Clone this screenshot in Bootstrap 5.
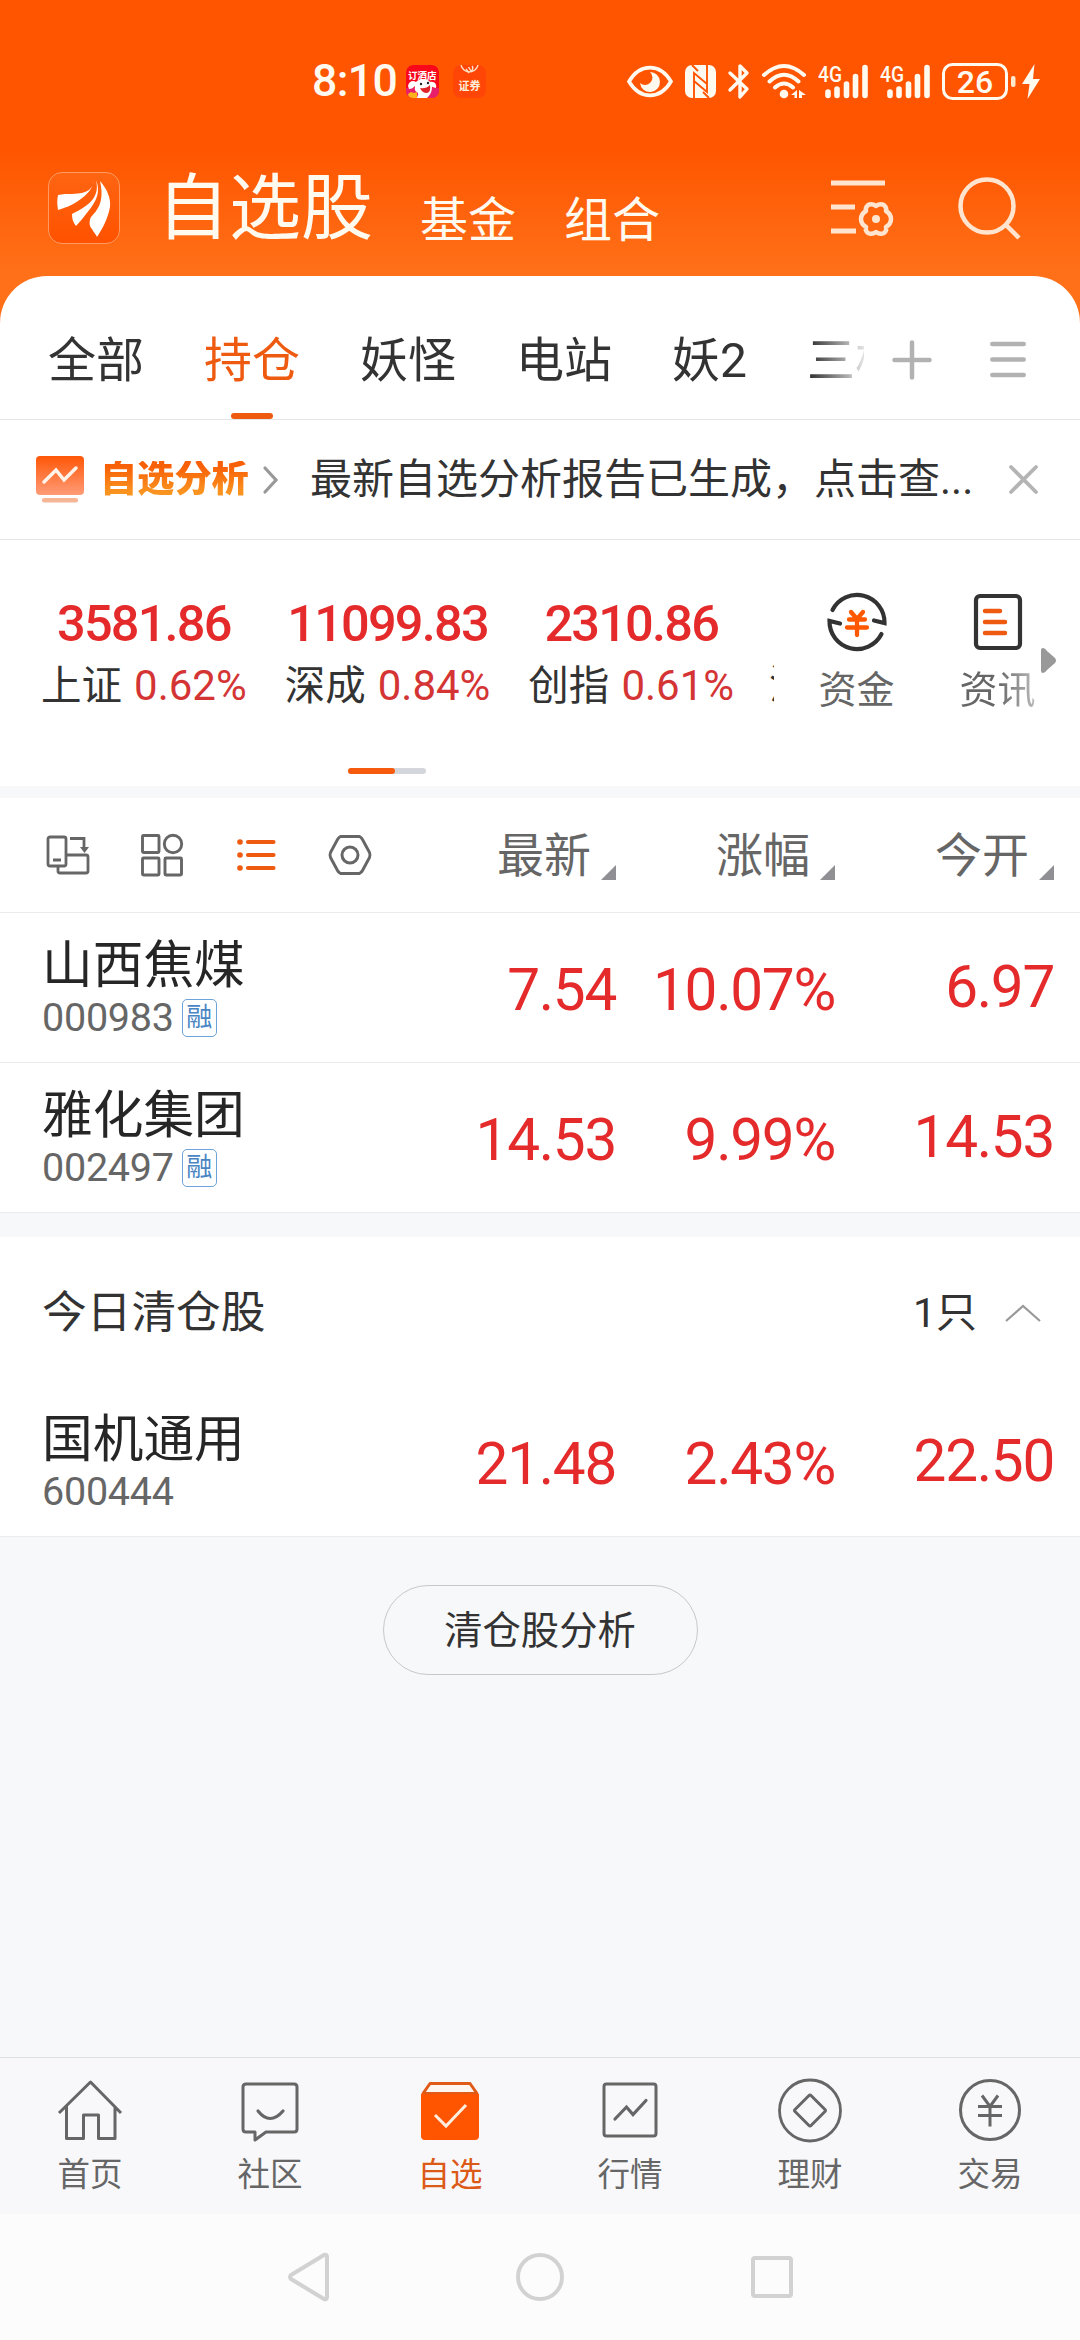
<!DOCTYPE html>
<html lang="zh-CN">
<head>
<meta charset="utf-8">
<meta name="viewport" content="width=device-width, initial-scale=1">
<title>自选股</title>
<link href="https://cdn.jsdelivr.net/npm/bootstrap@5.3.0/dist/css/bootstrap.min.css" rel="stylesheet">
<style>
html,body{width:1080px;height:2340px;overflow:hidden}
body{font-family:Roboto,"Noto Sans CJK SC",sans-serif;background:#f7f8fa;color:#333;line-height:1;-webkit-text-size-adjust:none}
svg{display:block;flex:none;overflow:visible}
.ln{fill:none;stroke:currentColor}
.hero{height:330px;background:linear-gradient(#ff5500 0,#ff5500 150px,#ff7018 270px,#ff7018 100%);margin-bottom:-54px;color:#fffaf0}
.status{height:162px;padding-left:312px}
.clock{font-size:44.500px;width:94px;letter-spacing:-.6px;font-weight:500}
.appico{width:33px;height:33px;border-radius:7px;overflow:hidden}
.appico+.appico{margin-left:14px}
.brand{height:92px;padding:0 59px 0 48px}
.brand-logo{width:72px;height:72px;border:1px solid #ff9a60;border-radius:14px;background:linear-gradient(#ff6512,#ff5200)}
.t-big{font-size:72px;margin-left:37px;height:70px}
.subtabs{height:73px;margin-left:47px;gap:48px}
.t-mid{font-size:48px;height:48px}
.panel{background:#fff;border-radius:47px 47px 0 0;height:144px;border-bottom:1px solid #e4e5e7;padding-left:48px}
.tabs{gap:60px;font-size:48px;width:816px;overflow:hidden;white-space:nowrap;padding-top:61px;
 -webkit-mask-image:linear-gradient(90deg,#000 762px,transparent 824px);mask-image:linear-gradient(90deg,#000 762px,transparent 824px)}
.tabs>div{flex:none}
.tab-on{color:#ee5a10}
.tab-on i{width:42px;height:6px;border-radius:3px;background:#ee5a10;margin-top:28px;display:block}
.notice{height:120px;border-bottom:1px solid #e4e5e7;padding:0 42px 0 36px}
.notice b{font-size:37.2px;font-weight:900;margin-left:16px;width:149px;white-space:nowrap;background:linear-gradient(#f86008 15%,#fa9420 85%);-webkit-background-clip:text;color:transparent}
.notice p{font-size:42px;margin:0 0 0 32px;width:662px;white-space:nowrap}
.quotes{height:246px}
.quote-top{height:228px}
.idx{width:774px;overflow:hidden;padding-left:22px}
.idx>div{width:243.7px;flex:none;text-align:center;padding-top:61px}
.idx>.idx-next{text-align:left;padding-left:16px;width:21px;overflow:hidden}
.idx strong{display:block;font-size:50.5px;font-weight:500;letter-spacing:-1.8px;color:#e42a2a;line-height:46px;height:64px}
.idx span{font-size:40.500px;white-space:nowrap;word-spacing:2px}
.idx em{font-style:normal;color:#d43534;font-size:42px}
.tool{width:141px;padding-top:52px;font-size:38px;color:#666}
.tool div{margin-top:19px}
.fade-out{background:linear-gradient(90deg,#666 50%,#bbb);-webkit-background-clip:text;color:transparent}
.more{position:absolute;left:267px;top:108px}
.bar{width:78px;height:6px;border-radius:3px;background:#d3d7dc;margin-left:348px}
.bar i{display:block;width:47px;height:6px;border-radius:3px;background:#f65a0c}
.band{background:#f7f8fa}
.thead-row{height:115px;border-bottom:1px solid #ebecee;background:#fff;padding-left:46px;color:#666}
.hcol{width:219px;font-size:47px;line-height:45px}
.hcol svg{margin:34px 0 0 10px}
.stock{height:150px;border-bottom:1px solid #ebecee;background:#fff;padding-left:42px}
.stock-id{width:355px}
.sname{font-size:50.7px;color:#262626;margin-top:26px;line-height:54px}
.scode{font-size:39.5px;color:#666;line-height:38px;margin-top:6px;letter-spacing:-.25px}
.rong{width:35px;height:38px;border:1.5px solid #6ca3d8;border-radius:5px;color:#4a86c4;font-size:26px;line-height:34px;text-align:center;margin-left:8px}
.val{width:219px;text-align:right;font-size:58.5px;color:#e42a2a;letter-spacing:-1.300px;line-height:60px;padding-top:47px}
.val.up{padding-top:44px}
.cleared{height:150px;background:#fff;padding:2px 39px 0 42px}
.pill{width:315px;height:90px;border:1.5px solid #c6c8ca;border-radius:45px;font-size:38.3px;color:#333;margin:48px auto 0;padding:2px 0 0;background:transparent}
.tabbar{height:157px;border-top:1px solid #dfe0e2;background:#f8f8fa;color:#666}
.tabbar>div{width:180px;font-size:32.5px}
.tabbar svg{height:64px;width:64px;margin:20px 0 17px}
.sysnav{height:126px;background:#fcfcfc;color:#d2d2d2;gap:187px}
</style>
</head>
<body>
<div class="d-flex flex-column h-100">
<header class="hero flex-shrink-0">
 <div class="status d-flex align-items-center">
  <div class="clock">8:10</div>
  <svg class="appico" viewBox="0 0 33 33"><rect width="33" height="33" rx="7" fill="#f9081c"/><path d="M0 23h33v10H0z" fill="#e8206a"/><text x="2" y="14" font-size="9.5" font-weight="700" fill="#fff">订酒店</text><path d="M2 21c1-5 5-6 8-4 3-4 12-4 14 0 5-1 7 3 6 6l-4-1c0 5-2 8-5 11H11c1-3 2-4 0-6-3-1-2-5-2-6-2 2-3 3-6 3z" fill="#fff"/><path d="M14 23q6 1 10-3 1 7-3 8-5 0-7-5z" fill="#e02428"/><circle cx="15" cy="19" r="1.2" fill="#222"/><circle cx="22" cy="18" r="1.2" fill="#222"/><path d="M2 29l3-2 3 1 3-1v6H3z" fill="#ffb21a"/></svg>
  <svg class="appico" viewBox="0 0 33 33"><rect width="33" height="33" rx="7" fill="#ff4606"/><path d="M8 0a8.7 8.7 0 0 0 17 0" fill="none" stroke="#ffe4c8" stroke-width="1.3"/><path d="M13 4l3 4M15.500 2l2.500 4M19 1q2 2-1 6" stroke="#ffe4c8" stroke-width="1.4" fill="none"/><text x="5.500" y="24.500" font-size="11" font-weight="700" fill="#ffeeda">证券</text></svg>
  <svg style="margin-left:141px" width="46" height="33" viewBox="0 0 46 33"><path class="ln" stroke-width="3.600" d="M2 16.500C13-2 33-2 44 16.500C33 35 13 35 2 16.500z"/><path d="M23 7a10 10 0 1 1-10 11 6.500 6.500 0 0 0 10-11z" fill="currentColor"/></svg>
  <svg style="margin-left:12px" width="31" height="33" viewBox="0 0 31 33"><rect width="31" height="33" rx="7" fill="currentColor"/><path stroke="#ff5500" stroke-width="1.900" fill="none" d="M9 33V8l13 11M9 16l13 11V0M7 0l6 6M18 27l6 6"/></svg>
  <svg style="margin-left:12px" width="22" height="35" viewBox="0 0 22 35"><path class="ln" stroke-width="3.400" stroke-linejoin="round" stroke-linecap="round" d="M2 9l17 16-7 8V2l7 7L2 26"/></svg>
  <svg style="margin-left:12px" width="44" height="35" viewBox="0 0 44 35"><path class="ln" stroke-width="4" stroke-linecap="round" d="M2 11Q22-7 42 11M7.500 17.500Q22 4 36.500 17.500M13 23.500q9-8 18 0"/><circle cx="22" cy="30" r="4.300" fill="currentColor"/><path fill="currentColor" d="M29 31l6-5v8h-2.500v-3zM37 26l7 5h-4v3h-3z"/></svg>
  <svg style="margin-left:12px" width="50" height="35" viewBox="0 0 50 35"><text x="0" y="17.500" font-size="22" font-weight="500" textLength="24" lengthAdjust="spacingAndGlyphs" fill="currentColor">4G</text><path class="ln" stroke-width="5.600" stroke-linecap="round" d="M10 28v3.500M19 25v6.500M28.500 20v11.500M37.500 12.500v19M47 3.500v28"/></svg>
  <svg style="margin-left:12px" width="50" height="35" viewBox="0 0 50 35"><text x="0" y="17.500" font-size="22" font-weight="500" textLength="24" lengthAdjust="spacingAndGlyphs" fill="currentColor">4G</text><path class="ln" stroke-width="5.600" stroke-linecap="round" d="M10 28v3.500M19 25v6.500M28.500 20v11.500M37.500 12.500v19M47 3.500v28"/></svg>
  <svg style="margin-left:12px" width="99" height="37" viewBox="0 0 99 37"><rect class="ln" x="1.500" y="1.500" width="63" height="34" rx="9" stroke-width="3" stroke="#ffe8cc"/><text x="33" y="29.500" text-anchor="middle" font-size="32" font-weight="500" fill="currentColor">26</text><rect x="69" y="13" width="4.500" height="11" rx="2" fill="#ffe8cc"/><path fill="currentColor" d="M92.500 1L80 21h7.500l-2 15L98 16h-7z"/></svg>
 </div>
 <div class="brand d-flex align-items-center">
  <div class="brand-logo"><svg width="70" height="70" viewBox="0 0 70 70"><path fill="#fff" d="M44 6c1 6-2 11-8 13-9 3-18 1-27 3-1 5-1 9 0 15 6-2 13-4 20-9 10-7 16-13 15-22zM47 7c4 17-6 25-24 34 0 5 1 8 4 12 5-5 9-11 14-17 6-8 11-17 6-29zM51 8c4 18 0 27-9 36-2 4-2 9 1 12 1 3 4 5 5 8 6-9 11-19 13-30 1-9-3-18-10-26z"/></svg></div>
  <div class="t-big">自选股</div>
  <div class="subtabs d-flex align-items-end"><div class="t-mid">基金</div><div class="t-mid">组合</div></div>
  <svg class="ms-auto" width="64" height="62" viewBox="0 0 64 62" style="color:#ffe5d0"><path class="ln" stroke-width="5" d="M0 6h54M0 30h24M0 54h25"/><path class="ln" stroke-width="4.500" stroke-linejoin="round" d="M37 28q4-2 8 1 4-3 8-1 3 3 2 6 5 3 5 8t-5 8q1 4-2 6-4 2-8-1-4 3-8 1-3-2-2-6-5-3-5-8t5-8q-1-3 2-6z"/><circle cx="45" cy="42" r="4" fill="currentColor"/></svg>
  <svg style="margin-left:63px" width="63" height="63" viewBox="0 0 63 63"><g stroke="#ffe5d0"><circle cx="29" cy="29" r="26.500" fill="none" stroke-width="4.500"/><path stroke-width="4.500" d="M48 48l13 13"/></g></svg>
 </div>
</header>
<nav class="panel d-flex flex-shrink-0 position-relative">
 <div class="tabs d-flex"><div>全部</div><div class="tab-on d-flex flex-column align-items-center">持仓<i></i></div><div>妖怪</div><div>电站</div><div>妖2</div><div>三板</div></div>
 <svg style="margin:64px 0 0 28px" width="40" height="40" viewBox="0 0 40 40"><path stroke="#b2b2b2" stroke-width="4.500" stroke-linecap="round" d="M20 2.500v35M2.500 20h35"/></svg>
 <svg style="margin:65px 0 0 58px" width="36" height="38" viewBox="0 0 36 38"><path stroke="#b2b2b2" stroke-width="4.500" stroke-linecap="round" d="M2.300 3h31.400M2.300 18.500h31.400M2.300 34h31.400"/></svg>
</nav>
<main class="flex-grow-1">
 <div class="bg-white">
 <section class="notice d-flex align-items-center">
  <svg width="48" height="48" viewBox="0 0 48 48"><defs><linearGradient id="g1" x2="0" y2="1"><stop stop-color="#ff5606"/><stop offset="1" stop-color="#ff9c78"/></linearGradient></defs><rect width="48" height="39" rx="4" fill="url(#g1)"/><path d="M8 26L20 14l8 10L40 12" fill="none" stroke="#fff4ea" stroke-width="3.500" stroke-linecap="round"/><rect x="6" y="42" width="36" height="4.500" rx="2" fill="#f6b594"/></svg>
  <b>自选分析</b>
  <svg style="margin-left:14px" width="15" height="28" viewBox="0 0 15 28"><path d="M2 2l11 12L2 26" fill="none" stroke="#999" stroke-width="3.200" stroke-linecap="round"/></svg>
  <p>最新自选分析报告已生成，点击查...</p>
  <svg class="ms-auto" width="29" height="29" viewBox="0 0 29 29"><path d="M2 2l25 25M27 2L2 27" stroke="#b4b4b4" stroke-width="3.800" stroke-linecap="round"/></svg>
 </section>
 <section class="quotes d-flex flex-column align-items-start">
  <div class="quote-top d-flex">
  <div class="idx d-flex">
   <div><strong>3581.86</strong><span>上证 <em>0.62%</em></span></div>
   <div><strong>11099.83</strong><span>深成 <em>0.84%</em></span></div>
   <div><strong>2310.86</strong><span>创指 <em>0.61%</em></span></div>
   <div class="idx-next"><strong>&nbsp;</strong><span>沪</span></div>
  </div>
  <div class="d-flex position-relative" style="padding-left:12px">
   <div class="tool d-flex flex-column align-items-center"><svg width="60" height="60" viewBox="0 0 60 60"><path d="M5.500 18A27.500 27.500 0 0 1 57.500 31L47 28.500M54.500 42A27.500 27.500 0 0 1 2.500 29l10.500 2.500" fill="none" stroke="#333" stroke-width="4.200" stroke-linecap="round"/><path d="M24 20l6 7 6-7M30 27v16M22 27.500h16M20 35.500h20" fill="none" stroke="#ff5800" stroke-width="4.300" stroke-linecap="round"/></svg><div>资金</div></div>
   <div class="tool d-flex flex-column align-items-center"><svg width="60" height="60" viewBox="0 0 60 60"><rect x="8" y="4" width="44" height="52" rx="4" fill="none" stroke="#333" stroke-width="4.200"/><path d="M17 19h15M17 30h20M17 41h20" stroke="#ee5a10" stroke-width="4.500" stroke-linecap="round"/></svg><div class="fade-out">资讯</div></div>
   <svg class="more" width="15" height="25" viewBox="0 0 15 25"><path d="M2 0q2 0 4 3l8 7q2 2.500 0 5l-8 7q-2 3-4 3-2 0-2-2V2q0-2 2-2z" fill="#999"/></svg>
  </div>
  </div>
  <div class="bar"><i></i></div>
 </section>
 </div>
 <div class="band" style="height:12px"></div>
 <div class="thead-row d-flex align-items-center">
  <svg width="44" height="42" viewBox="0 0 44 42"><g class="ln" stroke-width="2.800"><rect x="2" y="3" width="18" height="29" rx="2"/><path d="M20 21h20q2 0 2 2v14q0 2-2 2H14q-2 0-2-2v-5M24 4.500h14v10M7 26h8"/></g><path d="M34 13h9l-4.500 6z" fill="currentColor"/></svg>
  <svg style="margin-left:51px" width="42" height="42" viewBox="0 0 42 42"><g class="ln" stroke-width="2.900"><rect x="1.500" y="1.500" width="16.500" height="17" rx="1"/><circle cx="32" cy="10" r="8.700"/><rect x="1.500" y="24" width="16.500" height="17" rx="1"/><rect x="24" y="24" width="16.500" height="17" rx="1"/></g></svg>
  <svg style="margin-left:54px" width="38" height="42" viewBox="0 0 38 42"><path d="M11 8h25.500M11 21h25.500M11 34h25.500" stroke="#ee5a10" stroke-width="4.200" stroke-linecap="round"/><g fill="#ee5a10"><circle cx="3" cy="8" r="2.800"/><circle cx="3" cy="21" r="2.800"/><circle cx="3" cy="34" r="2.800"/></g></svg>
  <svg style="margin-left:54px" width="42" height="40" viewBox="0 0 42 40"><path class="ln" stroke-width="2.900" stroke-linejoin="round" d="M11.500 1.500h19q2 1 3 3l7 13q1 2.500 0 5l-7 13q-1 2-3 3h-19q-2-1-3-3l-7-13q-1-2.500 0-5l7-13q1-2 3-3z"/><circle class="ln" stroke-width="3" cx="21" cy="20" r="8"/></svg>
  <div class="d-flex" style="margin-left:26px">
   <div class="hcol d-flex justify-content-end align-items-center">最新<svg width="15" height="15"><path d="M15 0v15H0z" fill="#909094"/></svg></div>
   <div class="hcol d-flex justify-content-end align-items-center">涨幅<svg width="15" height="15"><path d="M15 0v15H0z" fill="#909094"/></svg></div>
   <div class="hcol d-flex justify-content-end align-items-center">今开<svg width="15" height="15"><path d="M15 0v15H0z" fill="#909094"/></svg></div>
  </div>
 </div>
 <div class="stock d-flex"><div class="stock-id"><div class="sname">山西焦煤</div><div class="scode d-flex">000983<span class="rong">融</span></div></div><div class="val">7.54</div><div class="val">10.07%</div><div class="val up">6.97</div></div>
 <div class="stock d-flex"><div class="stock-id"><div class="sname">雅化集团</div><div class="scode d-flex">002497<span class="rong">融</span></div></div><div class="val">14.53</div><div class="val">9.99%</div><div class="val up">14.53</div></div>
 <div class="band" style="height:24px"></div>
 <div class="cleared d-flex align-items-center"><div style="font-size:44.700px">今日清仓股</div><div class="ms-auto" style="font-size:41px">1只</div><svg style="margin-left:28px" width="36" height="18" viewBox="0 0 36 18"><path d="M1 17L18 2l17 15" fill="none" stroke="#999" stroke-width="2.200"/></svg></div>
 <div class="stock d-flex"><div class="stock-id"><div class="sname">国机通用</div><div class="scode">600444</div></div><div class="val">21.48</div><div class="val">2.43%</div><div class="val up">22.50</div></div>
 <button class="pill btn d-flex align-items-center justify-content-center">清仓股分析</button>
</main>
<nav class="tabbar d-flex flex-shrink-0 text-center">
 <div class="d-flex flex-column align-items-center"><svg viewBox="0 0 64 64"><path class="ln" stroke-width="3" stroke-linejoin="round" d="M1 35L32.500 4 63 35M8.500 28v32.500h17V37h15v23.500H57V28"/></svg>首页</div>
 <div class="d-flex flex-column align-items-center"><svg viewBox="0 0 64 64"><path class="ln" stroke-width="3" stroke-linejoin="round" d="M8 6h48q3 0 3 3v42q0 3-3 3H28l-11 8v-8H8q-3 0-3-3V9q0-3 3-3z"/><path class="ln" stroke-width="3.200" stroke-linecap="round" d="M20 33q12 15 25 0"/></svg>社区</div>
 <div class="d-flex flex-column align-items-center" style="color:#dc5a18"><svg viewBox="0 0 64 64"><path d="M12 5.500h40l7 10H5z" fill="#fff6f0" stroke="#e05a18" stroke-width="3" stroke-linejoin="round"/><path d="M3 16h58v42q0 4-4 4H7q-4 0-4-4z" fill="#ff5500"/><path d="M17 37l11 11 20-21" stroke="#ffeedd" stroke-width="3" fill="none"/></svg>自选</div>
 <div class="d-flex flex-column align-items-center"><svg viewBox="0 0 64 64"><rect class="ln" x="6" y="6" width="52" height="52" rx="2.500" stroke-width="3"/><path class="ln" stroke-width="3.200" stroke-linecap="round" d="M17 41l11.500-12 6.500 7.500 13-14"/></svg>行情</div>
 <div class="d-flex flex-column align-items-center"><svg viewBox="0 0 64 64"><circle class="ln" cx="32" cy="32.500" r="30.500" stroke-width="2.800"/><path class="ln" stroke-width="3" stroke-linejoin="round" d="M31 17.500q1-1 2 0l14 14q1 1 0 2l-14 14q-1 1-2 0l-14-14q-1-1 0-2z"/></svg>理财</div>
 <div class="d-flex flex-column align-items-center"><svg viewBox="0 0 64 64"><circle class="ln" cx="32" cy="32" r="29.500" stroke-width="3"/><path class="ln" stroke-width="3" d="M24 17.500l8 11 8-11M32 28v20.500M20 28.500h24M20 37.500h24"/></svg>交易</div>
</nav>
<footer class="sysnav d-flex flex-shrink-0 align-items-center justify-content-center">
 <svg width="41" height="50" viewBox="0 0 41 50"><path class="ln" stroke-width="4" stroke-linejoin="round" d="M36 3q3-1 3 2v40q0 3-3 2L3 27q-2-2 0-4z"/></svg>
 <svg width="48" height="48" viewBox="0 0 48 48"><circle class="ln" cx="24" cy="24" r="22" stroke-width="4"/></svg>
 <svg width="42" height="42" viewBox="0 0 42 42"><rect class="ln" x="2" y="2" width="38" height="38" rx="2" stroke-width="4"/></svg>
</footer>
</div>
<script src="https://cdn.jsdelivr.net/npm/bootstrap@5.3.0/dist/js/bootstrap.bundle.min.js"></script>
</body>
</html>
